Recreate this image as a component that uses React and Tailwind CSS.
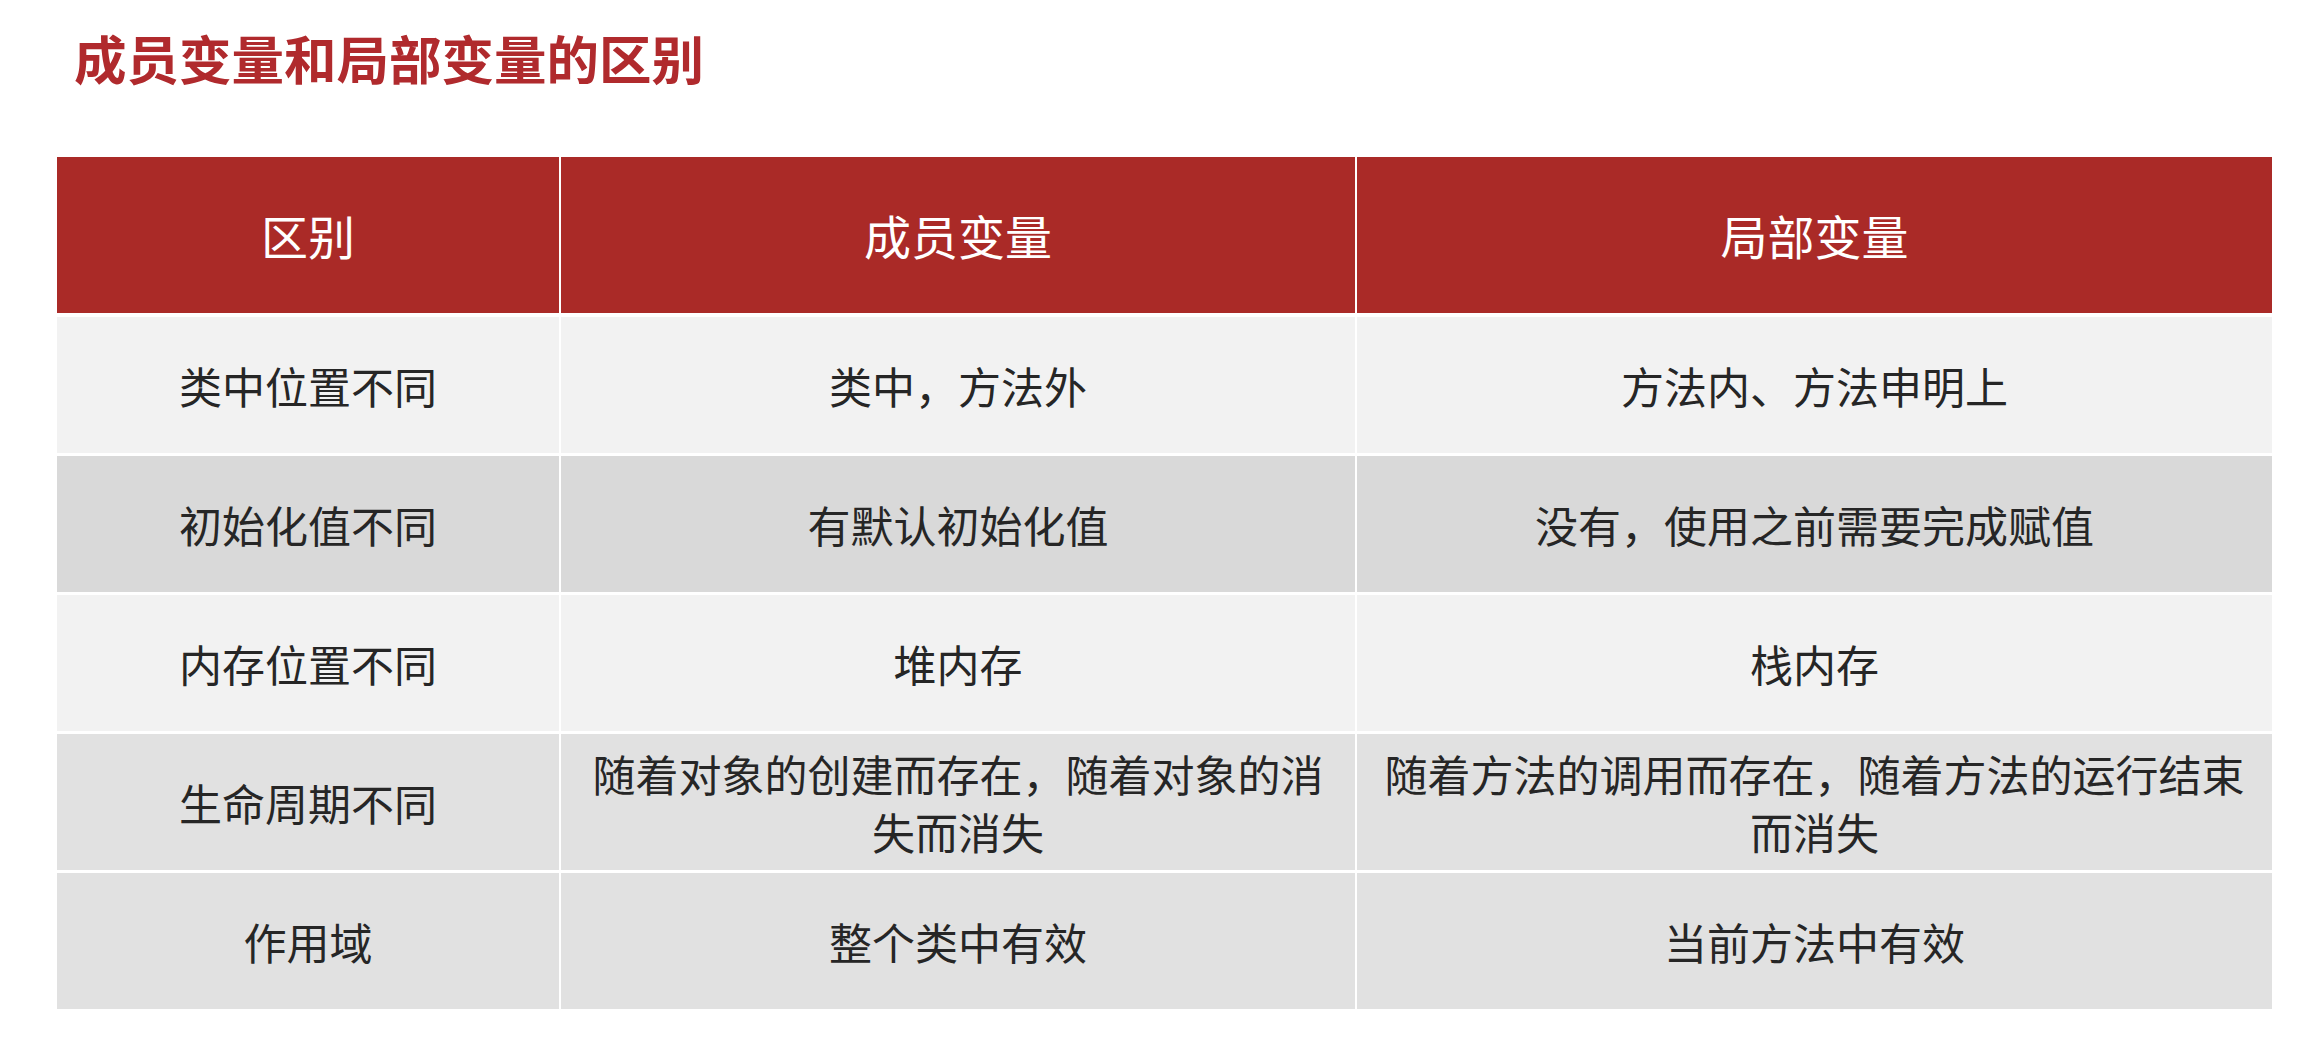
const HEADERS = ['区别', '成员变量', '局部变量']

const ROWS = [
  { bg: 'bg-[#f2f2f2]', cells: [['类中位置不同'], ['类中，方法外'], ['方法内、方法申明上']] },
  { bg: 'bg-[#d9d9d9]', cells: [['初始化值不同'], ['有默认初始化值'], ['没有，使用之前需要完成赋值']] },
  { bg: 'bg-[#f2f2f2]', cells: [['内存位置不同'], ['堆内存'], ['栈内存']] },
  {
    bg: 'bg-[#e1e1e1]',
    cells: [
      ['生命周期不同'],
      ['随着对象的创建而存在，随着对象的消', '失而消失'],
      ['随着方法的调用而存在，随着方法的运行结束', '而消失']
    ]
  },
  { bg: 'bg-[#e1e1e1]', cells: [['作用域'], ['整个类中有效'], ['当前方法中有效']] }
]

const FONT = 'font-["Noto_Sans_CJK_SC","Noto_Sans",sans-serif]'

export default function App() {
  return (
    <div className={`min-h-screen w-full bg-white ${FONT}`}>
      <h1 className="pl-[74px] pt-[22px] text-[52.5px] font-bold leading-[70px] text-[#b02a2d]">
        成员变量和局部变量的区别
      </h1>

      <div className="ml-[57px] mt-[65px] grid w-fit grid-cols-[502px_794px_915px] gap-x-[2px]">
        {HEADERS.map((h) => (
          <div
            key={h}
            className="flex h-[156px] items-center justify-center bg-[#aa2a27] text-[47px] text-white"
          >
            {h}
          </div>
        ))}
      </div>

      <div className="ml-[57px] mt-[4px] grid w-fit grid-cols-[502px_794px_915px] gap-x-[2px] gap-y-[3px]">
        {ROWS.map((row, i) =>
          row.cells.map((lines, j) => (
            <div
              key={`${i}-${j}`}
              className={`flex h-[136px] flex-col items-center justify-center ${row.bg} text-[43px] leading-[58px] text-[#262626]`}
            >
              {lines.map((l) => (
                <span key={l} className="whitespace-nowrap">
                  {l}
                </span>
              ))}
            </div>
          ))
        )}
      </div>
    </div>
  )
}
